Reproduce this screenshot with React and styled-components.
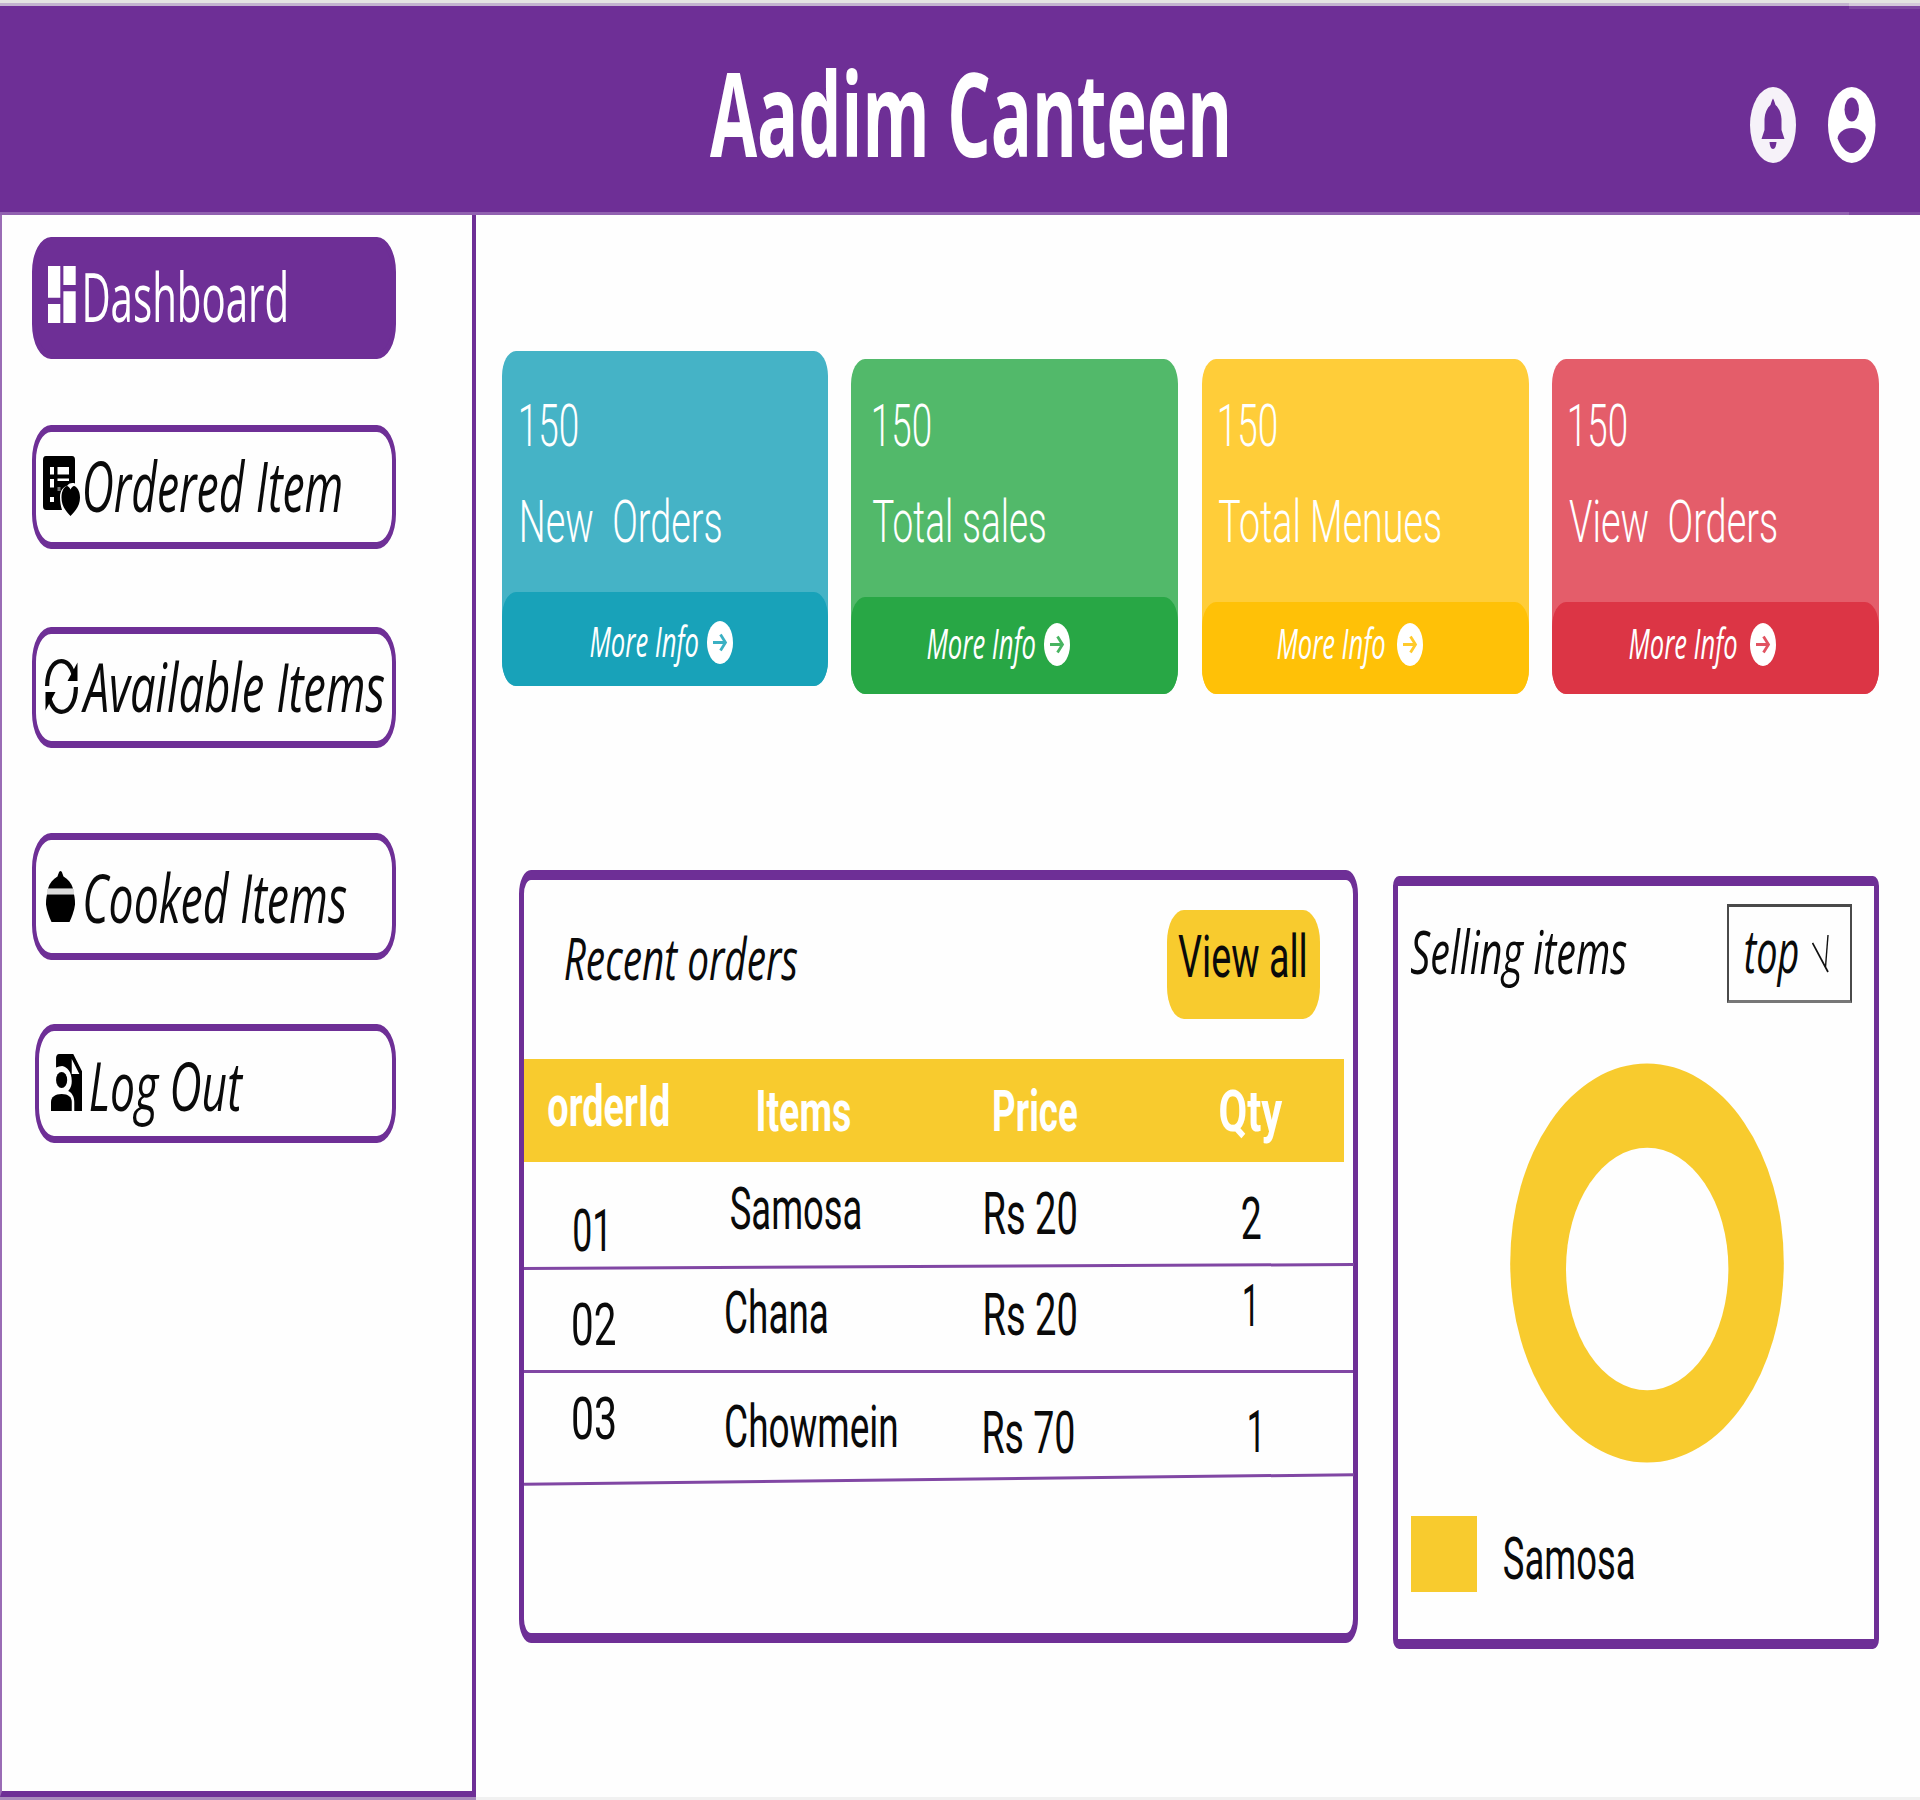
import React, { useLayoutEffect, useState } from "react";
import styled, { createGlobalStyle, css } from "styled-components";

const purple = "#6e2f96";
const amber = "#f8cb2e";

const GlobalStyle = createGlobalStyle`
  *, *::before, *::after { box-sizing: border-box; }
  body { margin: 0; background: #fefefe; color: #0a0a0a; }
  svg { display: block; flex: none; }
`;

/* ---------- condensed text ---------- */

const FAMILY = {
  roboto: { name: '"Roboto"', capTop: 0.13 },
  open: { name: '"Open Sans"', capTop: 0.174 },
};

const TextBox = styled.div`
  flex: none;
  width: ${(p) => p.$w}px;
  height: ${(p) => p.$size}px;
  margin-left: ${(p) => p.$ml || 0}px;
  margin-top: ${(p) => p.$mt || 0}px;
  color: ${(p) => p.$color || "inherit"};
`;

const TextInk = styled.span`
  display: inline-block;
  vertical-align: top;
  white-space: pre;
  transform-origin: 0 0;
  font-family: ${(p) => p.$family}, sans-serif;
  font-size: ${(p) => p.$size}px;
  font-weight: ${(p) => p.$weight};
  font-style: ${(p) => (p.$italic ? "italic" : "normal")};
  line-height: ${(p) => p.$size}px;
`;

/* Squeezes one line of text horizontally so that its ink is exactly w pixels wide.
   mt is the distance from the top of the slot to the top of the capitals. */
function Condensed({ children, w, cap = 41.7, weight = 400, italic, family, color, ml, mt = 0 }) {
  const face = FAMILY[family || (italic ? "open" : "roboto")];
  const size = Math.round((cap / 0.712) * 10) / 10;
  const [fit, setFit] = useState({ scale: 1, shift: 0 });
  useLayoutEffect(() => {
    const ctx = document.createElement("canvas").getContext("2d");
    ctx.font = `${italic ? "italic " : ""}${weight} ${size}px ${face.name}, sans-serif`;
    const m = ctx.measureText(children);
    const scale = w / (m.actualBoundingBoxLeft + m.actualBoundingBoxRight);
    setFit({ scale, shift: m.actualBoundingBoxLeft * scale });
  }, [children, w, size, weight, italic, face.name]);
  return (
    <TextBox $w={w} $size={size} $ml={ml} $mt={mt - size * face.capTop} $color={color}>
      <TextInk
        $family={face.name}
        $size={size}
        $weight={weight}
        $italic={italic}
        style={{ transform: `translateX(${fit.shift}px) scaleX(${fit.scale})` }}
      >
        {children}
      </TextInk>
    </TextBox>
  );
}

/* ---------- icons ---------- */

const Icon = styled.svg.attrs({ preserveAspectRatio: "none", "aria-hidden": true })`
  width: ${(p) => p.$w}px;
  height: ${(p) => p.$h}px;
  margin-left: ${(p) => p.$ml || 0}px;
  margin-top: ${(p) => p.$mt || 0}px;
`;

const BellIcon = (p) => (
  <Icon viewBox="0 0 46 76" {...p}>
    <ellipse cx="23" cy="38" rx="23" ry="38" fill="#f6f2f9" />
    <path d="M23 11.500C22 13 21.400 15 20.500 18c-3.500 3-5.700 8-6 14V43L11.500 52h23L31.500 43V32c-.3-6-2.500-11-6-14-.9-3-1.500-5-2.500-6.500z" fill={purple} />
    <path d="M19.500 55h7c-.4 4-1.300 7-3.500 7s-3.100-3-3.500-7z" fill={purple} />
  </Icon>
);

const UserIcon = (p) => (
  <Icon viewBox="0 0 48 76" {...p}>
    <ellipse cx="24" cy="38" rx="24" ry="38" fill="#fff" />
    <ellipse cx="24" cy="22.500" rx="7.300" ry="12" fill={purple} />
    <path d="M24 41c7.500 0 14.300 5 14.300 10.500C35.500 59 30 66 24 66S12.500 59 9.700 51.500C9.700 46 16.500 41 24 41z" fill={purple} />
  </Icon>
);

const DashboardIcon = (p) => (
  <Icon viewBox="3 3 18 18" fill="#fff" {...p}>
    <path d="M3 13h8V3H3v10zm0 8h8v-6H3v6zm10 0h8V11h-8v10zm0-18v6h8V3h-8z" />
  </Icon>
);

const OrderedIcon = (p) => (
  <Icon viewBox="0 0 37 60" {...p}>
    <path d="M3 0h26a3 4 0 0 1 3 4v23.500c-3-1-5.500-.5-7.500 2C20 31 17 35 17 41c0 5 .8 9 2 13H3a3 4 0 0 1-3-4V4a3 4 0 0 1 3-4z" />
    <path d="M7 11h4v7.500H7zM14.500 11h11.500v7.500H14.500zM7 23h4v8.500H7zM14.500 22.500h11.500v2.500H14.500zM7 41h4v5H7z" fill="#fff" />
    <path d="M14.500 31h3v4h-3z" fill="#777" />
    <path d="M27.500 60C22 54.500 18.500 49 18.500 41.500c0-7 3-11 5.500-11.500 1 0 2.500 1.500 3.500 3.500 1-2 2.500-3.500 3.500-3.500 2.500.5 6 4.500 6 11.500C37 49 33 54.500 27.500 60z" />
  </Icon>
);

const SyncIcon = (p) => (
  <Icon viewBox="0 0 33 55" {...p}>
    <g fill="none" stroke="#0a0a0a" strokeWidth="4.200">
      <path d="M2.100 27C2.200 12 8 2.200 16.500 2.200c5 0 9.500 5 12 13" />
      <path d="M30.900 28C30.800 43 25 52.800 16.500 52.800c-5 0-9.500-5-12-13" />
    </g>
    <path d="M32.500 3.500v18.500H22.500zM.5 51.500V33H10.500z" />
  </Icon>
);

const PotIcon = (p) => (
  <Icon viewBox="0 0 29 51" {...p}>
    <path d="M14.500 0c1.500 0 2 3 3 5.500C22 8 25.500 12 27 17.500H2C3.500 12 7 8 11.500 5.500c1-2.500 1.500-5.500 3-5.500z" />
    <path d="M1 18h27v5.500H1z" fill="#dcdcdc" />
    <path d="M1 23.500h27c1 4 1 8 1 10-1 7-3 12-5.500 17.500h-18C3 45.500 1 40.500 0 33.500c0-2 0-6 1-10z" />
  </Icon>
);

const LogoutIcon = (p) => (
  <Icon viewBox="0 0 31 57" {...p}>
    <path d="M5 4c0-2 1-4 3-4h14l9 18v39h-8V48c0-5-2-9-6-11 3-3 3.500-7 3.500-10C20.500 18 16 13 11 12c-2 0-4 .5-6 1.500z" />
    <path d="M20.500 5v15h7.500z" fill="#fff" />
    <ellipse cx="10.500" cy="26" rx="5.500" ry="8" />
    <path d="M0 57V48c0-5 4-8 10.500-8S20.500 43 20.500 48v9z" />
  </Icon>
);

const ArrowIcon = ({ tint, ...p }) => (
  <Icon viewBox="0 0 26 43" {...p}>
    <ellipse cx="13" cy="21.500" rx="13" ry="21.500" fill="#fff" />
    <path d="M6 21.500h12M13.500 13.500l5 8-5 8" fill="none" stroke={tint} strokeWidth="2.800" opacity="0.850" />
  </Icon>
);

const Tick = (p) => (
  <Icon viewBox="0 0 17 38" fill="none" stroke="#111" {...p}>
    <path d="M.5 8 16 37" strokeWidth="1.700" />
    <path d="M16 0 13.500 32" strokeWidth="1.400" />
  </Icon>
);

/* ---------- frame ---------- */

const Page = styled.div`
  display: flex;
  flex-direction: column;
  width: 1920px;
  height: 1800px;
  overflow: hidden;
  background: #fefefe;
`;

const TopStrip = styled.div`
  flex: none;
  height: 6px;
  background: linear-gradient(90deg, #c3b3cf 1849px, #d4c8da 1849px) 0 3px / 100% 3px no-repeat #e4e4e2;
`;

const Header = styled.header`
  flex: none;
  display: flex;
  align-items: flex-start;
  height: 209px;
  padding-left: 710.2px;
  background:
    linear-gradient(90deg, transparent 1849px, #7f48a2 1849px) 0 0 / 100% 3px no-repeat,
    linear-gradient(90deg, #9161b0 1849px, #7f48a2 1849px) 0 100% / 100% 3px no-repeat,
    ${purple};
`;

const Body = styled.div`
  flex: 1;
  min-height: 0;
  display: flex;
`;

const BottomStrip = styled.div`
  flex: none;
  height: 3px;
  background: linear-gradient(90deg, #a98bbd 476px, #f1f1f1 476px);
`;

const Sidebar = styled.nav`
  flex: none;
  display: flex;
  flex-direction: column;
  width: 476px;
  padding-left: 29.500px;
  border: solid ${purple};
  border-width: 0 4px 6px 2px;
  border-left-color: #9a6cb5;
`;

const NavItem = styled.a`
  flex: none;
  display: flex;
  align-items: flex-start;
  width: ${(p) => p.$w || 364.6}px;
  height: ${(p) => p.$h}px;
  margin-top: ${(p) => p.$mt}px;
  margin-left: ${(p) => p.$ml || 0}px;
  border: solid ${purple};
  border-width: 7.500px 4px;
  border-radius: 19px / 35px;
  ${(p) => p.$active && css`
    background: ${purple};
    color: #fff;
  `}
`;

const Main = styled.main`
  flex: 1;
  min-width: 0;
  display: flex;
  flex-direction: column;
`;

/* ---------- stat cards ---------- */

const CardRow = styled.section`
  display: flex;
  align-items: flex-start;
  height: 519px;
  padding: 136px 0 0 25.600px;
`;

const Card = styled.article`
  flex: none;
  display: flex;
  flex-direction: column;
  width: ${(p) => p.$w}px;
  height: ${(p) => p.$h}px;
  margin-top: ${(p) => p.$mt}px;
  margin-left: ${(p) => p.$ml}px;
  border-radius: 14px / 25px;
  background: ${(p) => p.$bg};
  color: #fff;
`;

const CardFooter = styled.footer`
  display: flex;
  align-items: flex-start;
  height: ${(p) => p.$h}px;
  margin-top: auto;
  border-radius: 14px / 25px;
  background: ${(p) => p.$bg};
`;

const cards = [
  { title: "New  Orders", w: 326, h: 335, mt: 0, ml: 0, bg: "#45b3c6", foot: "#18a2b9", footH: 94.5, x: 19.5, numY: 53, numW: 56.8, labelX: 20.5, labelW: 199, infoX: 88.5, infoY: 36, infoW: 108, arrowX: 8.7, arrowY: 29 },
  { title: "Total sales", w: 327.4, h: 335, mt: 7.5, ml: 23, bg: "#52b96a", foot: "#28a745", footH: 97, x: 23.5, numY: 45.5, numW: 56.5, labelX: 22.5, labelW: 172, infoX: 76.5, infoY: 32.5, infoW: 108, arrowX: 9, arrowY: 26 },
  { title: "Total Menues", w: 327.2, h: 335, mt: 7.5, ml: 24.2, bg: "#ffcd39", foot: "#ffc107", footH: 92, x: 18, numY: 45.5, numW: 56.8, labelX: 17, labelW: 221.3, infoX: 75, infoY: 27.5, infoW: 107.6, arrowX: 12.3, arrowY: 21 },
  { title: "View  Orders", w: 327.4, h: 335, mt: 7.5, ml: 22.6, bg: "#e45d6a", foot: "#dc3545", footH: 92, x: 18.5, numY: 45.5, numW: 56.5, labelX: 17, labelW: 207.5, infoX: 77, infoY: 27.5, infoW: 107.5, arrowX: 13.2, arrowY: 21 },
];

/* ---------- panels ---------- */

const PanelRow = styled.section`
  display: flex;
  align-items: flex-start;
  padding-left: 42.500px;
`;

const OrdersPanel = styled.section`
  flex: none;
  display: flex;
  flex-direction: column;
  width: 839.5px;
  height: 773px;
  margin-top: 136px;
  border: solid ${purple};
  border-width: 10px 5.500px;
  border-radius: 12px / 24px;
`;

const PanelHead = styled.div`
  flex: none;
  display: flex;
  align-items: flex-start;
  height: ${(p) => p.$h}px;
`;

const ViewAll = styled.button`
  flex: none;
  display: flex;
  align-items: flex-start;
  width: 153px;
  height: 109.500px;
  margin: 29.500px 0 0 369.500px;
  padding: 0 0 0 11px;
  border: 0;
  border-radius: 17px / 32px;
  background: ${amber};
  color: #0a0a0a;
`;

const TableRow = styled.div`
  flex: none;
  display: grid;
  grid-template-columns: 180px 260px 250px 1fr;
  align-items: start;
  height: ${(p) => p.$h}px;
  width: ${(p) => (p.$head ? "820.500px" : "auto")};
  background: ${(p) => (p.$head ? amber : "transparent")};
  color: ${(p) => (p.$head ? "#fff" : "#0a0a0a")};
`;

const Divider = styled.div`
  flex: none;
  height: 2.800px;
  background: #8147a4;
  transform: rotate(${(p) => p.$tilt}deg);
`;

/* Each cell: text, ink width, left offset in its column, top of capitals in its row. */
const headCells = [
  ["orderId", 120.7, 24.3, 26.5],
  ["Items", 92.2, 54.7, 31],
  ["Price", 83, 30.8, 31],
  ["Qty", 62.3, 6.6, 31],
];

const rows = [
  { h: 103.8, tilt: -0.28, cells: [["01", 31, 50, 48.5], ["Samosa", 129.6, 27.2, 26.5], ["Rs 20", 91, 21.9, 31], ["2", 18.5, 28.2, 36]] },
  { h: 102.2, tilt: 0, cells: [["02", 42, 49.8, 36], ["Chana", 101, 22, 23.5], ["Rs 20", 91, 21.9, 26], ["1", 9, 30.9, 16.5]] },
  { h: 104.6, tilt: -0.67, cells: [["03", 42, 49.8, 25], ["Chowmein", 170.6, 22, 33], ["Rs 70", 89.6, 20, 38.5], ["1", 9.6, 35.7, 38]] },
];

const SellingPanel = styled.section`
  flex: none;
  display: flex;
  flex-direction: column;
  width: 486.500px;
  height: 773.500px;
  margin-top: 141.500px;
  margin-left: 34.500px;
  border: solid ${purple};
  border-width: 10px 5px;
  border-radius: 6px / 10px;
`;

const TopSelect = styled.div`
  flex: none;
  display: flex;
  align-items: flex-start;
  width: 125px;
  height: 98.500px;
  margin: 18.500px 0 0 101.300px;
  border: solid #4a4a4a;
  border-width: 3px 2px;
  border-bottom-color: #777;
`;

const Donut = styled.svg`
  width: 274px;
  height: 400px;
  margin: 0 0 0 112px;
`;

const Legend = styled.div`
  display: flex;
  align-items: flex-start;
  margin: 53px 0 0 13px;
`;

const Swatch = styled.div`
  flex: none;
  width: 66.500px;
  height: 76px;
  background: ${amber};
`;

export default function App() {
  return (
    <>
      <GlobalStyle />
      <Page>
        <TopStrip />
        <Header>
          <Condensed w={517} cap={83} weight={700} family="open" color="#fff" mt={68}>Aadim Canteen</Condensed>
          <BellIcon $w={46} $h={76} $ml={523} $mt={81.3} />
          <UserIcon $w={47.5} $h={76} $ml={32.2} $mt={81.3} />
        </Header>
        <Body>
          <Sidebar>
            <NavItem $active $h={122} $mt={21.500}>
              <DashboardIcon $w={27.7} $h={57} $ml={12.4} $mt={22} />
              <Condensed w={201} cap={48} weight={500} family="open" ml={9.5} mt={31}>Dashboard</Condensed>
            </NavItem>
            <NavItem $h={124} $mt={66}>
              <OrderedIcon $w={37} $h={60} $ml={7} $mt={24.500} />
              <Condensed w={256} cap={49.5} italic ml={5.7} mt={32}>Ordered Item</Condensed>
            </NavItem>
            <NavItem $h={121.500} $mt={78}>
              <SyncIcon $w={33} $h={55} $ml={9.500} $mt={25} />
              <Condensed w={303.300} cap={48} italic ml={3.4} mt={31}>Available Items</Condensed>
            </NavItem>
            <NavItem $h={127} $mt={84.500}>
              <PotIcon $w={29} $h={51} $ml={10.6} $mt={31.500} />
              <Condensed w={261.400} cap={48} italic ml={10.400} mt={36}>Cooked Items</Condensed>
            </NavItem>
            <NavItem $h={119} $mt={64.500} $w={361.700} $ml={3}>
              <LogoutIcon $w={31.400} $h={57} $ml={12} $mt={22.500} />
              <Condensed w={153.500} cap={48.500} italic ml={7.700} mt={31.500}>Log Out</Condensed>
            </NavItem>
          </Sidebar>
          <Main>
            <CardRow>
              {cards.map((c) => (
                <Card key={c.title} $w={c.w} $h={c.h} $mt={c.mt} $ml={c.ml} $bg={c.bg}>
                  <PanelHead $h={c.numY + 43}>
                    <Condensed w={c.numW} weight={360} ml={c.x} mt={c.numY + 0.5}>150</Condensed>
                  </PanelHead>
                  <PanelHead $h={90}>
                    <Condensed w={c.labelW} weight={360} ml={c.labelX} mt={54}>{c.title}</Condensed>
                  </PanelHead>
                  <CardFooter $h={c.footH} $bg={c.foot}>
                    <Condensed w={c.infoW} cap={30} italic ml={c.infoX} mt={c.infoY}>More Info</Condensed>
                    <ArrowIcon tint={c.foot} $w={26} $h={43} $ml={c.arrowX} $mt={c.arrowY} />
                  </CardFooter>
                </Card>
              ))}
            </CardRow>
            <PanelRow>
              <OrdersPanel>
                <PanelHead $h={179}>
                  <Condensed w={232.800} italic ml={41.700} mt={58}>Recent orders</Condensed>
                  <ViewAll>
                    <Condensed w={127} mt={26.500}>View all</Condensed>
                  </ViewAll>
                </PanelHead>
                <TableRow $head $h={102.500}>
                  {headCells.map(([text, w, ml, mt]) => (
                    <Condensed key={text} w={w} ml={ml} mt={mt} cap={41} weight={700}>{text}</Condensed>
                  ))}
                </TableRow>
                {rows.map((row) => (
                  <React.Fragment key={row.cells[0][0]}>
                    <TableRow $h={row.h}>
                      {row.cells.map(([text, w, ml, mt], i) => (
                        <Condensed key={i} w={w} weight={380} ml={ml} mt={mt}>{text}</Condensed>
                      ))}
                    </TableRow>
                    <Divider $tilt={row.tilt} />
                  </React.Fragment>
                ))}
              </OrdersPanel>
              <SellingPanel>
                <PanelHead $h={177.500}>
                  <Condensed w={215.700} cap={43} italic ml={13} mt={46}>Selling items</Condensed>
                  <TopSelect>
                    <Condensed w={52.600} cap={43} italic ml={15.500} mt={24}>top</Condensed>
                    <Tick $w={17} $h={38} $ml={14.500} $mt={28} />
                  </TopSelect>
                </PanelHead>
                <Donut viewBox="0 0 274 400">
                  <ellipse cx="137" cy="200" rx="136.800" ry="199.500" fill={amber} />
                  <ellipse cx="137.200" cy="206" rx="81.200" ry="121.300" fill="#fefefe" />
                </Donut>
                <Legend>
                  <Swatch />
                  <Condensed w={129.800} weight={380} ml={27.400} mt={22}>Samosa</Condensed>
                </Legend>
              </SellingPanel>
            </PanelRow>
          </Main>
        </Body>
        <BottomStrip />
      </Page>
    </>
  );
}
